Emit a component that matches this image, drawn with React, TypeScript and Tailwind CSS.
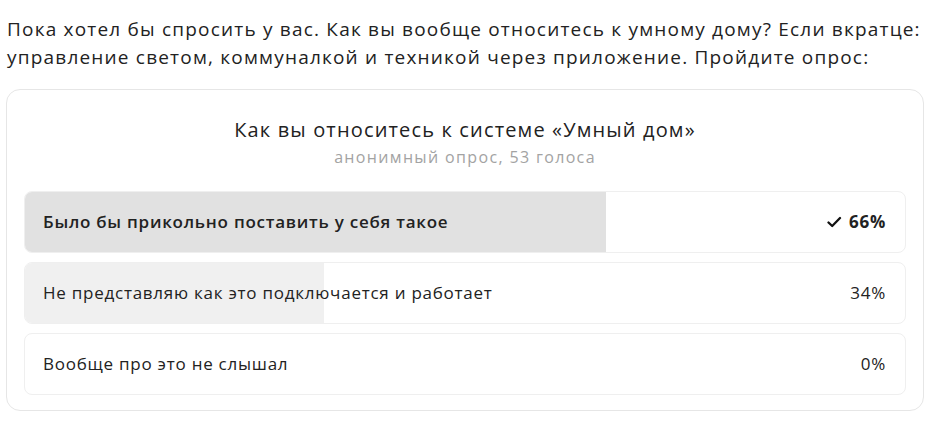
import React from 'react';

const options = [
  { label: 'Было бы прикольно поставить у себя такое', pct: 66, chosen: true },
  { label: 'Не представляю как это подключается и работает', pct: 34, chosen: false },
  { label: 'Вообще про это не слышал', pct: 0, chosen: false },
];

export default function App() {
  return (
    <div className="w-[941px] h-[425px] bg-white text-[#222] font-['Open_Sans',sans-serif] overflow-hidden">
      <p className="pl-[7px] pt-[15px] text-[19px] leading-[28px] tracking-[1.2px] whitespace-nowrap">
        Пока хотел бы спросить у вас. Как вы вообще относитесь к умному дому? Если вкратце:
        <br />
        управление светом, коммуналкой и техникой через приложение. Пройдите опрос:
      </p>

      <div className="ml-[6px] mt-[18px] w-[918px] rounded-[14px] border border-[#e6e6e6] px-[17px] pt-[26px] pb-[15px]">
        <div className="text-center">
          <h3 className="text-[20px] leading-[28px] font-medium tracking-[1.15px]">Как вы относитесь к системе «Умный дом»</h3>
          <p className="mt-[2px] text-[16px] leading-[22px] text-[#a3a3a3] tracking-[1.35px]">анонимный опрос, 53 голоса</p>
        </div>

        <div className="mt-[23px] flex flex-col gap-[9px]">
          {options.map((o) => (
            <div
              key={o.label}
              className="relative h-[62px] rounded-[8px] border border-[#efefef] overflow-hidden"
            >
              <div
                className={o.chosen ? 'absolute inset-y-0 left-0 bg-[#e1e1e1]' : 'absolute inset-y-0 left-0 bg-[#f0f0f0]'}
                style={{ width: `${o.pct}%` }}
              />
              <div className="relative flex h-full items-center justify-between pl-[18px] pr-[19px] text-[17px] tracking-[0.75px]">
                <span className={o.chosen ? 'font-semibold' : ''}>{o.label}</span>
                <span className={o.chosen ? 'flex items-center gap-[7px] font-bold' : 'flex items-center'}>
                  {o.chosen && (
                    <svg width="15" height="12" viewBox="0 0 15 12" fill="none">
                      <path d="M1.5 6.5L5.2 10L13 2" stroke="#111" strokeWidth="2.3" strokeLinecap="round" strokeLinejoin="round" />
                    </svg>
                  )}
                  {o.pct}%
                </span>
              </div>
            </div>
          ))}
        </div>
      </div>
    </div>
  );
}
